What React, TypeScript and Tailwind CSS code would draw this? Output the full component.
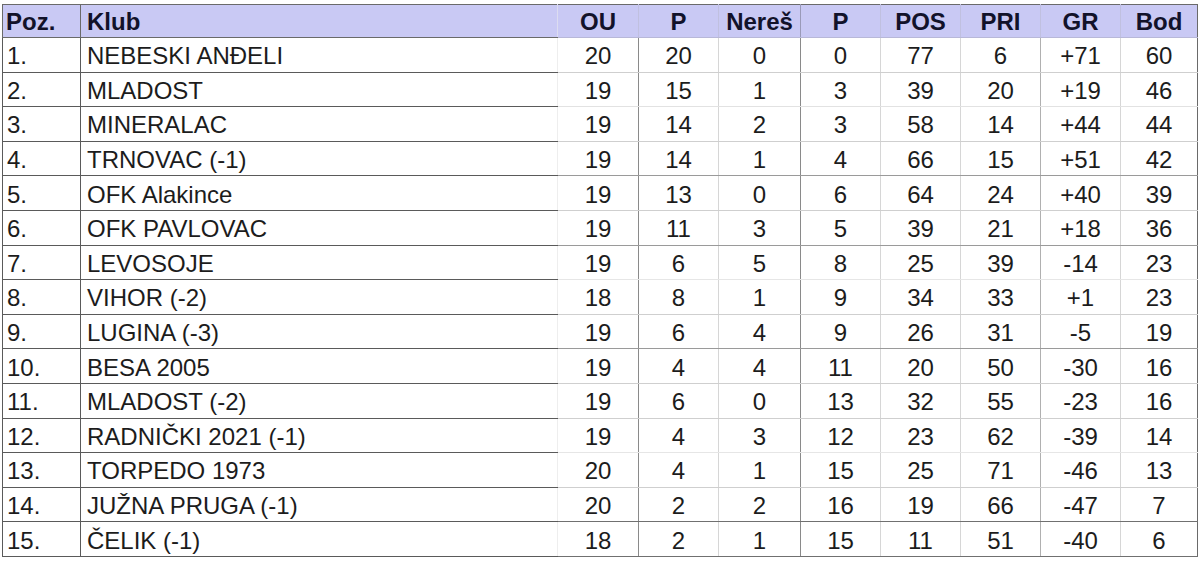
const rows: [string, string, number, number, number, number, number, number, string, number][] = [
  ["1.", "NEBESKI ANĐELI", 20, 20, 0, 0, 77, 6, "+71", 60],
  ["2.", "MLADOST", 19, 15, 1, 3, 39, 20, "+19", 46],
  ["3.", "MINERALAC", 19, 14, 2, 3, 58, 14, "+44", 44],
  ["4.", "TRNOVAC (-1)", 19, 14, 1, 4, 66, 15, "+51", 42],
  ["5.", "OFK Alakince", 19, 13, 0, 6, 64, 24, "+40", 39],
  ["6.", "OFK PAVLOVAC", 19, 11, 3, 5, 39, 21, "+18", 36],
  ["7.", "LEVOSOJE", 19, 6, 5, 8, 25, 39, "-14", 23],
  ["8.", "VIHOR (-2)", 18, 8, 1, 9, 34, 33, "+1", 23],
  ["9.", "LUGINA (-3)", 19, 6, 4, 9, 26, 31, "-5", 19],
  ["10.", "BESA 2005", 19, 4, 4, 11, 20, 50, "-30", 16],
  ["11.", "MLADOST (-2)", 19, 6, 0, 13, 32, 55, "-23", 16],
  ["12.", "RADNIČKI 2021 (-1)", 19, 4, 3, 12, 23, 62, "-39", 14],
  ["13.", "TORPEDO 1973", 20, 4, 1, 15, 25, 71, "-46", 13],
  ["14.", "JUŽNA PRUGA (-1)", 20, 2, 2, 16, 19, 66, "-47", 7],
  ["15.", "ČELIK (-1)", 18, 2, 1, 15, 11, 51, "-40", 6],
];

// row separators in the number columns are uneven in the scan
const numLine: Record<number, string> = {
  1: "border-b-[#e2e2e2]",
  6: "border-b-[#e6e6e6]",
  11: "border-b-[#e6e6e6]",
  3: "border-b-[#9a9a9a]",
  5: "border-b-[#9a9a9a]",
  8: "border-b-[#9a9a9a]",
  13: "border-b-[#707070]",
  14: "border-b-[#707070]",
};

const sides = [
  "border-r border-r-[#8a8a8a]", // OU
  "border-r border-r-[#d6d6d6]", // P
  "border-r border-r-[#8a8a8a]", // Nereš
  "border-r border-r-[#d6d6d6]", // P
  "border-r border-r-[#d6d6d6]", // POS
  "border-r border-r-[#b0b0b0]", // PRI
  "border-r border-r-[#d6d6d6]", // GR
  "border-r border-r-[#6a6a6a]", // Bod
];

const heads = ["OU", "P", "Nereš", "P", "POS", "PRI", "GR", "Bod"];

export default function App() {
  return (
    <div className="min-h-[562px] bg-white pt-[4px] pl-[2px] font-['Liberation_Sans',Arial,sans-serif] text-[24px] text-[#1c1c1c]">
      <table className="table-fixed border-collapse w-[1195px]">
        <colgroup>
          <col className="w-[78px]" />
          <col className="w-[477px]" />
          <col className="w-[81px]" />
          <col className="w-[80px]" />
          <col className="w-[82px]" />
          <col className="w-[80px]" />
          <col className="w-[80px]" />
          <col className="w-[80px]" />
          <col className="w-[80px]" />
          <col className="w-[77px]" />
        </colgroup>
        <thead>
          <tr className="h-[33px] bg-[#c9c9f4] font-bold text-[#12122a]">
            <th className="border border-[#6a6a6a] px-[3px] pt-[2px] text-left leading-none">Poz.</th>
            <th className="border-y border-r border-[#6a6a6a] border-r-[#dcdcf0] px-[6px] pt-[2px] text-left leading-none">Klub</th>
            {heads.map((h, i) => (
              <th
                key={i}
                className={`border-t border-b border-t-[#6a6a6a] border-b-[#b8b8d8] pt-[2px] text-center leading-none ${
                  i === 7 ? "border-r border-r-[#6a6a6a]" : i === 2 ? "border-r border-r-[#9a9ab8]" : "border-r border-r-[#c0c0e0]"
                }`}
              >
                {h}
              </th>
            ))}
          </tr>
        </thead>
        <tbody>
          {rows.map((r, ri) => {
            const line = numLine[ri] ?? "border-b-[#cfcfcf]";
            return (
              <tr key={ri} className="h-[34.6px]">
                <td className="border-x border-b border-[#5a5a5a] px-[4px] pt-[3px] leading-none">{r[0]}</td>
                <td className="border-b border-r border-b-[#5a5a5a] border-r-[#eeeeee] px-[6px] pt-[3px] leading-none">{r[1]}</td>
                {r.slice(2).map((v, ci) => (
                  <td key={ci} className={`border-b pt-[3px] text-center leading-none ${line} ${sides[ci]}`}>
                    {v}
                  </td>
                ))}
              </tr>
            );
          })}
        </tbody>
      </table>
    </div>
  );
}
